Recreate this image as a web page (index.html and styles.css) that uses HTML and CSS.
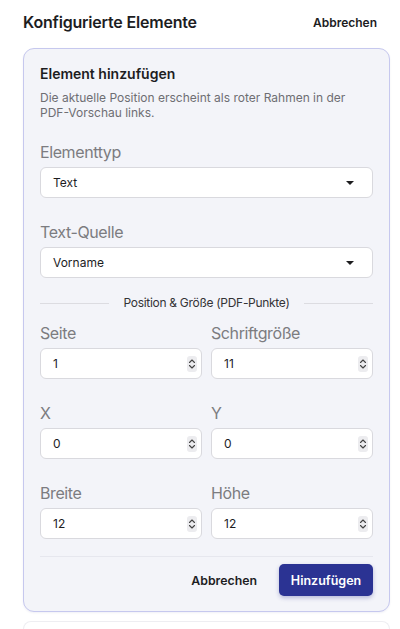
FILE: index.html
```html
<!DOCTYPE html>
<html lang="de">
<head>
<meta charset="utf-8">
<title>Konfigurierte Elemente</title>
<link rel="stylesheet" href="styles.css">
</head>
<body>
<div class="panel">
  <header class="head">
    <h2 class="title">Konfigurierte Elemente</h2>
    <button class="link-btn">Abbrechen</button>
  </header>

  <section class="card">
    <h3 class="card-title">Element hinzufügen</h3>
    <p class="card-desc">Die aktuelle Position erscheint als roter Rahmen in der PDF-Vorschau links.</p>

    <div class="field first">
      <label class="label">Elementtyp</label>
      <div class="select"><span>Text</span><span class="caret"></span></div>
    </div>
    <div class="field">
      <label class="label">Text-Quelle</label>
      <div class="select"><span>Vorname</span><span class="caret"></span></div>
    </div>

    <div class="divider"><span>Position &amp; Größe (PDF-Punkte)</span></div>

    <div class="grid">
      <div class="cell">
        <label class="label">Seite</label>
        <div class="num"><span>1</span><span class="spin"><svg viewBox="0 0 10 16" width="10" height="16"><path d="M2.5 6.5 5 4 7.5 6.5M2.5 9.5 5 12 7.5 9.5" fill="none" stroke="#444" stroke-width="1.1" stroke-linecap="round" stroke-linejoin="round"/></svg></span></div>
      </div>
      <div class="cell">
        <label class="label">Schriftgröße</label>
        <div class="num"><span>11</span><span class="spin"><svg viewBox="0 0 10 16" width="10" height="16"><path d="M2.5 6.5 5 4 7.5 6.5M2.5 9.5 5 12 7.5 9.5" fill="none" stroke="#444" stroke-width="1.1" stroke-linecap="round" stroke-linejoin="round"/></svg></span></div>
      </div>
      <div class="cell">
        <label class="label">X</label>
        <div class="num"><span>0</span><span class="spin"><svg viewBox="0 0 10 16" width="10" height="16"><path d="M2.5 6.5 5 4 7.5 6.5M2.5 9.5 5 12 7.5 9.5" fill="none" stroke="#444" stroke-width="1.1" stroke-linecap="round" stroke-linejoin="round"/></svg></span></div>
      </div>
      <div class="cell">
        <label class="label">Y</label>
        <div class="num"><span>0</span><span class="spin"><svg viewBox="0 0 10 16" width="10" height="16"><path d="M2.5 6.5 5 4 7.5 6.5M2.5 9.5 5 12 7.5 9.5" fill="none" stroke="#444" stroke-width="1.1" stroke-linecap="round" stroke-linejoin="round"/></svg></span></div>
      </div>
      <div class="cell">
        <label class="label">Breite</label>
        <div class="num"><span>12</span><span class="spin"><svg viewBox="0 0 10 16" width="10" height="16"><path d="M2.5 6.5 5 4 7.5 6.5M2.5 9.5 5 12 7.5 9.5" fill="none" stroke="#444" stroke-width="1.1" stroke-linecap="round" stroke-linejoin="round"/></svg></span></div>
      </div>
      <div class="cell">
        <label class="label">Höhe</label>
        <div class="num"><span>12</span><span class="spin"><svg viewBox="0 0 10 16" width="10" height="16"><path d="M2.5 6.5 5 4 7.5 6.5M2.5 9.5 5 12 7.5 9.5" fill="none" stroke="#444" stroke-width="1.1" stroke-linecap="round" stroke-linejoin="round"/></svg></span></div>
      </div>
    </div>

    <footer class="actions">
      <button class="link-btn cancel">Abbrechen</button>
      <button class="primary">Hinzufügen</button>
    </footer>
  </section>

  <div class="next-card"></div>
</div>
</body>
</html>
```

FILE: styles.css
```css
* { box-sizing: border-box; }
html, body { margin: 0; padding: 0; background: #ffffff; }
body {
  font-family: Inter, "Noto Sans", "Liberation Sans", sans-serif;
  color: #1d1d1f;
  overflow: hidden;
}
.panel { padding: 12px 10px 0 23px; }

.head {
  display: flex;
  align-items: center;
  justify-content: space-between;
  height: 20px;
  padding-right: 13px;
}
.title {
  margin: 0;
  font-size: 16px;
  font-weight: 600;
  line-height: 20px;
  letter-spacing: -0.2px;
  color: #1d1d1f;
}
.link-btn {
  border: 0;
  background: none;
  padding: 0;
  font-family: inherit;
  font-size: 12px;
  font-weight: 600;
  color: #1d1d1f;
  cursor: pointer;
}

.card {
  margin-top: 16px;
  border: 1px solid #c6c8ee;
  border-radius: 11px;
  background: #f3f4f9;
  padding: 15px 16px 15px 16px;
  box-shadow: 0 1px 2px rgba(60, 64, 140, 0.08);
}
.card-title {
  margin: 0;
  font-size: 14px;
  font-weight: 600;
  line-height: 20px;
  color: #1d1d1f;
}
.card-desc {
  margin: 6px 0 0 0;
  font-size: 12px;
  line-height: 15px;
  color: #6e6e73;
}

.field { margin-top: 24px; }
.field.first { margin-top: 22px; }
.label {
  display: block;
  font-size: 16px;
  line-height: 20px;
  letter-spacing: -0.4px;
  color: #7c7c80;
  margin-bottom: 5px;
}
.select, .num {
  height: 31px;
  background: #ffffff;
  border: 1px solid #d9d9de;
  border-radius: 6px;
  display: flex;
  align-items: center;
  justify-content: space-between;
  padding: 0 18px 0 12px;
  font-size: 12px;
  color: #1d1d1f;
}
.caret {
  width: 0;
  height: 0;
  border-left: 4px solid transparent;
  border-right: 4px solid transparent;
  border-top: 4.5px solid #1d1d1f;
}
.num { padding-right: 4px; }
.spin {
  width: 10px;
  height: 16px;
  border-radius: 3px;
  background: #ececef;
  display: flex;
}

.divider {
  margin-top: 17px;
  display: flex;
  align-items: center;
  gap: 10px;
  font-size: 12px;
  line-height: 16px;
  letter-spacing: -0.3px;
  color: #333336;
}
.divider::before, .divider::after {
  content: "";
  flex: 1;
  height: 1px;
  background: #dcdce1;
}
.divider span { padding: 0 5px; }

.grid {
  margin-top: 12px;
  display: grid;
  grid-template-columns: 1fr 1fr;
  column-gap: 9px;
  row-gap: 24px;
}

.actions {
  margin-top: 17px;
  border-top: 1px solid #e6e7ee;
  padding-top: 7px;
  display: flex;
  justify-content: flex-end;
  align-items: center;
  gap: 22px;
}
.cancel { font-size: 12.3px; }
.primary {
  height: 32px;
  width: 94px;
  border: 0;
  border-radius: 5px;
  background: #2b3393;
  color: #ffffff;
  font-family: inherit;
  font-size: 12.5px;
  font-weight: 600;
  box-shadow: 0 2px 4px rgba(43, 51, 147, 0.3);
  cursor: pointer;
}

.next-card {
  margin-top: 9px;
  height: 8px;
  border: 1px solid #eeeef2;
  border-bottom: 0;
  border-radius: 10px 10px 0 0;
  background: #ffffff;
}
```
